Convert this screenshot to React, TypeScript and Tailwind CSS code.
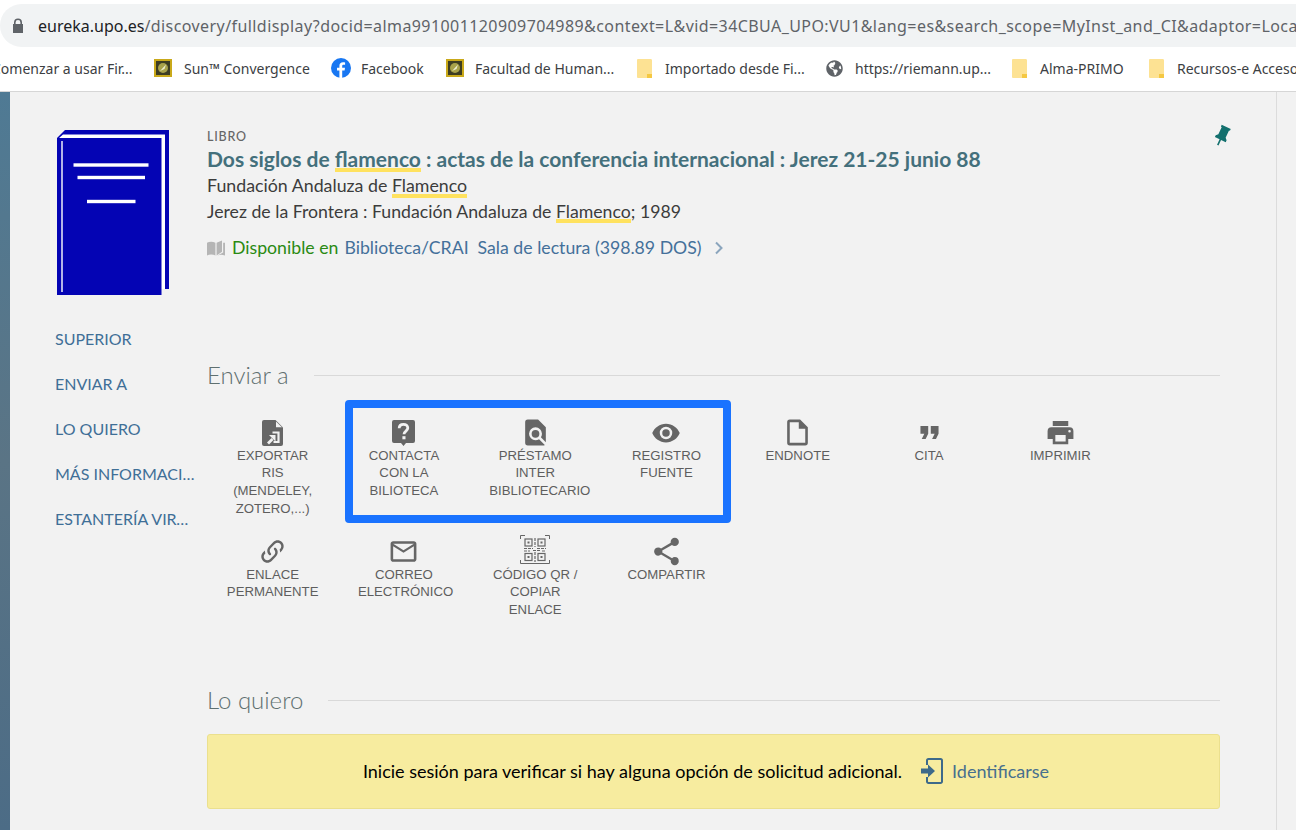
import React from 'react';
import { FaGlobeAmericas } from 'react-icons/fa';

const Fav = () => (
  <svg width="18" height="18" viewBox="0 0 18 18" className="shrink-0">
    <rect width="18" height="18" fill="#c9a91a" />
    <rect x="2" y="2" width="14" height="14" fill="#3d3d22" />
    <circle cx="9" cy="9" r="5" fill="#a8a24a" />
    <path d="M6 12 L12 5.5 L10.5 10 Z" fill="#eeeed0" />
  </svg>
);

const Fb = () => (
  <svg width="20" height="20" viewBox="0 0 20 20" className="shrink-0">
    <circle cx="10" cy="10" r="10" fill="#1877f2" />
    <path d="M11.2 20V12.6H13.6L14 9.8H11.2V8.2C11.2 7.3 11.6 6.8 12.7 6.8H14.1V4.4C13.6 4.3 12.8 4.2 12 4.2C9.8 4.2 8.4 5.5 8.4 7.8V9.8H6V12.6H8.4V20Z" fill="#fff" />
  </svg>
);

const Folder = () => (
  <svg width="15" height="19" viewBox="0 0 15 19" className="shrink-0">
    <path d="M1 0H12A2 2 0 0 1 15 2V19H1A1 1 0 0 1 0 18V1A1 1 0 0 1 1 0Z" fill="#fde293" />
    <path d="M10 19V15H15V19Z" fill="#f5c842" />
  </svg>
);

const bookmarks = [
  { label: 'Comenzar a usar Fir...', width: 'w-[154px]', icon: null, text: '-ml-[8px]' },
  { label: 'Sun™ Convergence', width: 'w-[177px]', icon: <Fav />, text: 'ml-[12px]' },
  { label: 'Facebook', width: 'w-[115px]', icon: <Fb />, text: 'ml-[10px]' },
  { label: 'Facultad de Human...', width: 'w-[191px]', icon: <Fav />, text: 'ml-[11px]' },
  { label: 'Importado desde Fi...', width: 'w-[189px]', icon: <Folder />, text: 'ml-[13px]' },
  { label: 'https://riemann.up...', width: 'w-[186px]', icon: <FaGlobeAmericas className="shrink-0 text-[17px] text-[#5f6368]" />, text: 'ml-[12px]' },
  { label: 'Alma-PRIMO', width: 'w-[137px]', icon: <Folder />, text: 'ml-[13px]' },
  { label: 'Recursos-e Acceso', width: 'w-[147px]', icon: <Folder />, text: 'ml-[13px]' },
];

const G = '#666666';

const IconExport = () => (
  <svg width="21" height="26" viewBox="0 0 21 26">
    <path d="M2 0H13.5L21 7.5V24A2 2 0 0 1 19 26H2A2 2 0 0 1 0 24V2A2 2 0 0 1 2 0Z" fill={G} />
    <path d="M14 1.5V7.2H20Z" fill="#f2f2f2" />
    <path d="M10.5 12.5H16.5V22H11.5" fill="none" stroke="#f2f2f2" strokeWidth="2.2" />
    <path d="M6 23.5L10.5 19" fill="none" stroke="#f2f2f2" strokeWidth="2.8" />
    <path d="M7 15H13.5V21.5Z" fill="#f2f2f2" />
  </svg>
);

const IconContact = () => (
  <svg width="23" height="26" viewBox="0 0 23 26">
    <path d="M2 0H21A2 2 0 0 1 23 2V21A2 2 0 0 1 21 23H14L11.5 26L9 23H2A2 2 0 0 1 0 21V2A2 2 0 0 1 2 0Z" fill={G} />
    <path d="M7.2 8.3C7.2 5.9 9 4.4 11.5 4.4C14 4.4 15.8 5.9 15.8 8.1C15.8 11 12 11.2 12 14.2" fill="none" stroke="#f2f2f2" strokeWidth="2.8" />
    <rect x="10.4" y="16.2" width="3.1" height="3.1" fill="#f2f2f2" />
  </svg>
);

const Mdi = ({ d, size = 24 }: { d: string; size?: number }) => (
  <svg width={size} height={size} viewBox="0 0 24 24" fill={G}>
    <path d={d} />
  </svg>
);

const IconQr = () => (
  <svg width="30" height="29" viewBox="0 0 30 29" fill="none" stroke={G} className="-mt-[4px]">
    <path d="M0.5 4V0.5H5M25 0.5H29.5V4M0.5 25V28.5H29.5V25" strokeWidth="1" />
    <rect x="5" y="4" width="7" height="7" strokeWidth="1.2" />
    <rect x="7.5" y="6.5" width="2" height="2" fill={G} stroke="none" />
    <rect x="18" y="4" width="7" height="7" strokeWidth="1.2" />
    <rect x="20.5" y="6.5" width="2" height="2" fill={G} stroke="none" />
    <rect x="5" y="18.5" width="7" height="7" strokeWidth="1.2" />
    <rect x="7.5" y="21" width="2" height="2" fill={G} stroke="none" />
    <rect x="18" y="18.5" width="7" height="7" strokeWidth="1.2" />
    <rect x="20.5" y="21" width="2" height="2" fill={G} stroke="none" />
    <path d="M15 3V12M4 13.5H13M17 13.5H26M4 16H10M13 15.5H20M22 16H26M15 17V27" strokeWidth="1.2" strokeDasharray="3 1" />
  </svg>
);

const actions = [
  { label: ['EXPORTAR', 'RIS', '(MENDELEY,', 'ZOTERO,...)'], icon: <IconExport /> },
  { label: ['CONTACTA', 'CON LA', 'BILIOTECA'], icon: <IconContact /> },
  { label: ['PRÉSTAMO', 'INTER', 'BIBLIOTECARIO'], icon: <Mdi size={31} d="M9,13A3,3 0 0,0 12,16A3,3 0 0,0 15,13A3,3 0 0,0 12,10A3,3 0 0,0 9,13M20,19.59V8L14,2H6A2,2 0 0,0 4,4V20A2,2 0 0,0 6,22H18C18.45,22 18.85,21.85 19.19,21.6L14.76,17.17C13.96,17.69 13,18 12,18A5,5 0 0,1 7,13A5,5 0 0,1 12,8A5,5 0 0,1 17,13C17,14 16.69,14.96 16.17,15.75L20,19.59Z" /> },
  { label: ['REGISTRO', 'FUENTE'], icon: <Mdi size={30} d="M12,9A3,3 0 0,0 9,12A3,3 0 0,0 12,15A3,3 0 0,0 15,12A3,3 0 0,0 12,9M12,17A5,5 0 0,1 7,12A5,5 0 0,1 12,7A5,5 0 0,1 17,12A5,5 0 0,1 12,17M12,4.5C7,4.5 2.73,7.61 1,12C2.73,16.39 7,19.5 12,19.5C17,19.5 21.27,16.39 23,12C21.27,7.61 17,4.5 12,4.5Z" /> },
  { label: ['ENDNOTE'], icon: <Mdi size={31} d="M6,2A2,2 0 0,0 4,4V20A2,2 0 0,0 6,22H18A2,2 0 0,0 20,20V8L14,2H6M6,4H13V9H18V20H6V4Z" /> },
  { label: ['CITA'], icon: <Mdi size={31} d="M14,17H17L19,13V7H13V13H16M6,17H9L11,13V7H5V13H8L6,17Z" /> },
  { label: ['IMPRIMIR'], icon: <Mdi size={31} d="M18,3H6V7H18M19,12A1,1 0 0,1 18,11A1,1 0 0,1 19,10A1,1 0 0,1 20,11A1,1 0 0,1 19,12M16,19H8V14H16M19,8H5A3,3 0 0,0 2,11V17H6V21H18V17H22V11A3,3 0 0,0 19,8Z" /> },
  { label: ['ENLACE', 'PERMANENTE'], icon: <Mdi size={29} d="M10.59,13.41C11,13.8 11,14.44 10.59,14.83C10.2,15.22 9.56,15.22 9.17,14.83C7.22,12.88 7.22,9.71 9.17,7.76V7.76L12.71,4.22C14.66,2.27 17.83,2.27 19.78,4.22C21.73,6.17 21.73,9.34 19.78,11.29L18.29,12.78C18.3,11.96 18.17,11.14 17.89,10.36L18.36,9.88C19.54,8.71 19.54,6.81 18.36,5.64C17.19,4.46 15.29,4.46 14.12,5.64L10.59,9.17C9.41,10.34 9.41,12.24 10.59,13.41M13.41,9.17C13.8,8.78 14.44,8.78 14.83,9.17C16.78,11.12 16.78,14.29 14.83,16.24V16.24L11.29,19.78C9.34,21.73 6.17,21.73 4.22,19.78C2.27,17.83 2.27,14.66 4.22,12.71L5.71,11.22C5.7,12.04 5.83,12.86 6.11,13.65L5.64,14.12C4.46,15.29 4.46,17.19 5.64,18.36C6.81,19.54 8.71,19.54 9.88,18.36L13.41,14.83C14.59,13.66 14.59,11.76 13.41,10.59C13,10.2 13,9.56 13.41,9.17Z" /> },
  { label: ['CORREO', 'ELECTRÓNICO'], icon: <Mdi size={31} d="M22 6C22 4.9 21.1 4 20 4H4C2.9 4 2 4.9 2 6V18C2 19.1 2.9 20 4 20H20C21.1 20 22 19.1 22 18V6M20 6L12 11L4 6H20M20 18H4V8L12 13L20 8V18Z" /> },
  { label: ['CÓDIGO QR /', 'COPIAR', 'ENLACE'], icon: <IconQr /> },
  { label: ['COMPARTIR'], icon: <Mdi size={33} d="M18,16.08C17.24,16.08 16.56,16.38 16.04,16.85L8.91,12.7C8.96,12.47 9,12.24 9,12C9,11.76 8.96,11.53 8.91,11.3L15.96,7.19C16.5,7.69 17.21,8 18,8A3,3 0 0,0 21,5A3,3 0 0,0 18,2A3,3 0 0,0 15,5C15,5.24 15.04,5.47 15.09,5.7L8.04,9.81C7.5,9.31 6.79,9 6,9A3,3 0 0,0 3,12A3,3 0 0,0 6,15C6.79,15 7.5,14.69 8.04,14.19L15.16,18.34C15.11,18.55 15.08,18.77 15.08,19C15.08,20.61 16.39,21.91 18,21.91C19.61,21.91 20.92,20.61 20.92,19A2.92,2.92 0 0,0 18,16.08Z" /> },
];

const Hl = ({ children }: { children: React.ReactNode }) => (
  <span className="inline-block border-b-[4px] border-[#ffe25f] leading-[0.87em]">{children}</span>
);

const BookCover = () => (
  <svg width="112" height="165" viewBox="0 0 112 165" className="block">
    <path d="M0 165V8L8 0H112V159H104.5V165Z" fill="#0404b4" />
    <path d="M6 4.5H108V159H104.5V8H2L6 4.5Z" fill="#fff" />
    <rect x="4.2" y="11" width="1.6" height="151" fill="#dfe0f5" />
    <rect x="16.5" y="33.3" width="75" height="3.4" fill="#fff" />
    <rect x="20.5" y="45.8" width="67.5" height="3.4" fill="#fff" />
    <rect x="30" y="69.8" width="48.5" height="3.4" fill="#fff" />
  </svg>
);

const SectionTitle = ({ title, lineClass }: { title: string; lineClass: string }) => (
  <div className="flex items-center">
    <h2 className="text-[24px] leading-[30px] font-light text-[#5f7070]">{title}</h2>
    <div className={`mt-[2px] h-px flex-1 bg-[#d9d9d9] ${lineClass}`} />
  </div>
);

export default function App() {
  return (
    <div className="relative flex h-[830px] w-[1296px] flex-col overflow-hidden bg-white font-['Lato',sans-serif]">
      {/* browser chrome */}
      <div className="h-[92px] shrink-0 border-b border-[#d6d6d6] bg-white pt-[4px] font-['Noto_Sans',sans-serif]">
        <div className="flex h-[43px] items-center overflow-hidden rounded-l-[22px] bg-[#f1f3f4] pl-[12px]">
          <svg width="12" height="16" viewBox="0 0 12 16" className="mr-[14px] shrink-0">
            <path d="M2 6V4.5A4 4 0 0 1 10 4.5V6H11V15H1V6ZM3.6 6H8.4V4.5A2.4 2.4 0 0 0 3.6 4.5Z" fill="#5f6368" fillRule="evenodd" />
          </svg>
          <span className="text-[16px] whitespace-nowrap text-[#5f6368]">
            <span className="text-[#202124]">eureka.upo.es</span>
            <span className="tracking-[0.42px]">/discovery/fulldisplay?docid=alma991001120909704989&context=L&vid=34CBUA_UPO:VU1&lang=es&search_scope=MyInst_and_CI&adaptor=Local</span>
          </span>
        </div>
        <div className="-mt-px flex h-[44px] items-center overflow-hidden text-[14px] whitespace-nowrap text-[#3c4043]">
          {bookmarks.map((b) => (
            <div key={b.label} className={`flex shrink-0 items-center ${b.width}`}>
              {b.icon}
              <span className={b.text}>{b.label}</span>
            </div>
          ))}
        </div>
      </div>

      <div className="flex flex-1">
        <div className="w-[10px] shrink-0 bg-gradient-to-b from-[#4f7a94] via-[#5a7485] to-[#4c6c86]" />
        <div className="flex flex-1 bg-[#f2f2f2]">
          <div className="flex w-[1267px] border-r border-[#dcdcdc] pt-[38px] pl-[46px]">
            {/* left column */}
            <div className="w-[151px] shrink-0">
              <div className="ml-px">
                <BookCover />
              </div>
              <nav className="mt-[33px] -ml-px flex flex-col gap-[23px] text-[16px] leading-[22px] text-[#3f6f97]">
                <a>SUPERIOR</a>
                <a>ENVIAR A</a>
                <a>LO QUIERO</a>
                <a className="w-[141px] truncate">MÁS INFORMACIÓN</a>
                <a className="w-[141px] truncate">ESTANTERÍA VIRTUAL</a>
              </nav>
            </div>

            {/* record */}
            <div className="w-[1013px] shrink-0">
              <div className="flex justify-between">
                <div className="-mt-[1px]">
                  <div className="text-[12.5px] leading-[16px] font-medium tracking-[0.8px] text-[#666]">LIBRO</div>
                  <h1 className="mt-[1px] text-[21px] leading-[26px] font-bold text-[#44707c]">
                    Dos siglos de <Hl>flamenco</Hl> : actas de la conferencia internacional : Jerez 21-25 junio 88
                  </h1>
                  <p className="mt-[1px] text-[17.8px] leading-[24px] text-[#3c3c3c]">
                    Fundación Andaluza de <Hl>Flamenco</Hl>
                  </p>
                  <p className="mt-[2px] text-[17.7px] leading-[24px] text-[#3c3c3c]">
                    Jerez de la Frontera : Fundación Andaluza de <Hl>Flamenco</Hl>; 1989
                  </p>
                  <div className="mt-[12px] flex items-center text-[17.7px] leading-[24px]">
                    <svg width="18" height="16" viewBox="0 0 24 20" className="mr-[7px]">
                      <path d="M0 3C3 1 8 1 11.2 3V20C8 18 3 18 0 20ZM12.8 3L20 0V15L12.8 20ZM21.5 3H24V20C20 18.5 17 18.5 14 20L21.5 16Z" fill="#b5b5b5" />
                    </svg>
                    <span className="text-[#2a8a13]">Disponible en</span>
                    <span className="ml-[6px] text-[#44709a]">Biblioteca/CRAI</span>
                    <span className="ml-[9px] text-[#44709a]">Sala de lectura (398.89 DOS)</span>
                    <svg width="10" height="14" viewBox="0 0 10 14" className="ml-[12px]">
                      <path d="M2 1.5L7.5 7L2 12.5" fill="none" stroke="#8ba5bd" strokeWidth="2" />
                    </svg>
                  </div>
                </div>
                <svg width="24" height="24" viewBox="0 0 24 24" className="mr-[-14px] -mt-[6px] rotate-[25deg]">
                  <path d="M16,12V4H17V2H7V4H8V12L6,14V16H11.2V22H12.8V16H18V14L16,12Z" fill="#13706e" />
                </svg>
              </div>

              <section className="mt-[100px]">
                <SectionTitle title="Enviar a" lineClass="ml-[25px]" />
                <div className="mt-[29px] grid w-[919px] grid-cols-7">
                  {actions.map((a) => (
                    <div key={a.label.join(' ')} className="flex h-[119px] flex-col items-center font-['Liberation_Sans',sans-serif] text-[13.2px] leading-[17.6px] text-[#5e5e5e]">
                      <div className="flex h-[28px] items-center justify-center">{a.icon}</div>
                      <div className="w-[92px] text-center whitespace-nowrap">
                        {a.label.map((l) => (
                          <div key={l}>{l}</div>
                        ))}
                      </div>
                    </div>
                  ))}
                </div>
              </section>

              <section className="mt-[28px]">
                <SectionTitle title="Lo quiero" lineClass="ml-[25px]" />
                <div className="mt-[19px] flex h-[75px] items-center justify-center rounded-[3px] border border-[#ebe08e] bg-[#f7ec9f] pr-[15px] text-[18px] text-black">
                  <span>Inicie sesión para verificar si hay alguna opción de solicitud adicional.</span>
                  <svg width="22" height="26" viewBox="0 0 22 26" className="ml-[19px]">
                    <path d="M6 7V2.5A1.5 1.5 0 0 1 7.5 1H19.5A1.5 1.5 0 0 1 21 2.5V23.5A1.5 1.5 0 0 1 19.5 25H7.5A1.5 1.5 0 0 1 6 23.5V19" fill="none" stroke="#3d6a8a" strokeWidth="2" />
                    <path d="M0 10.5H7V6.5L14 13L7 19.5V15.5H0Z" fill="#3d6a8a" />
                  </svg>
                  <span className="ml-[9px] text-[#47708e]">Identificarse</span>
                </div>
              </section>
            </div>
          </div>
        </div>
      </div>

      {/* annotation drawn over the screenshot */}
      <div className="absolute top-[400px] left-[345px] h-[123px] w-[386px] rounded-[4px] border-[8px] border-[#1a73ff]" />
    </div>
  );
}
